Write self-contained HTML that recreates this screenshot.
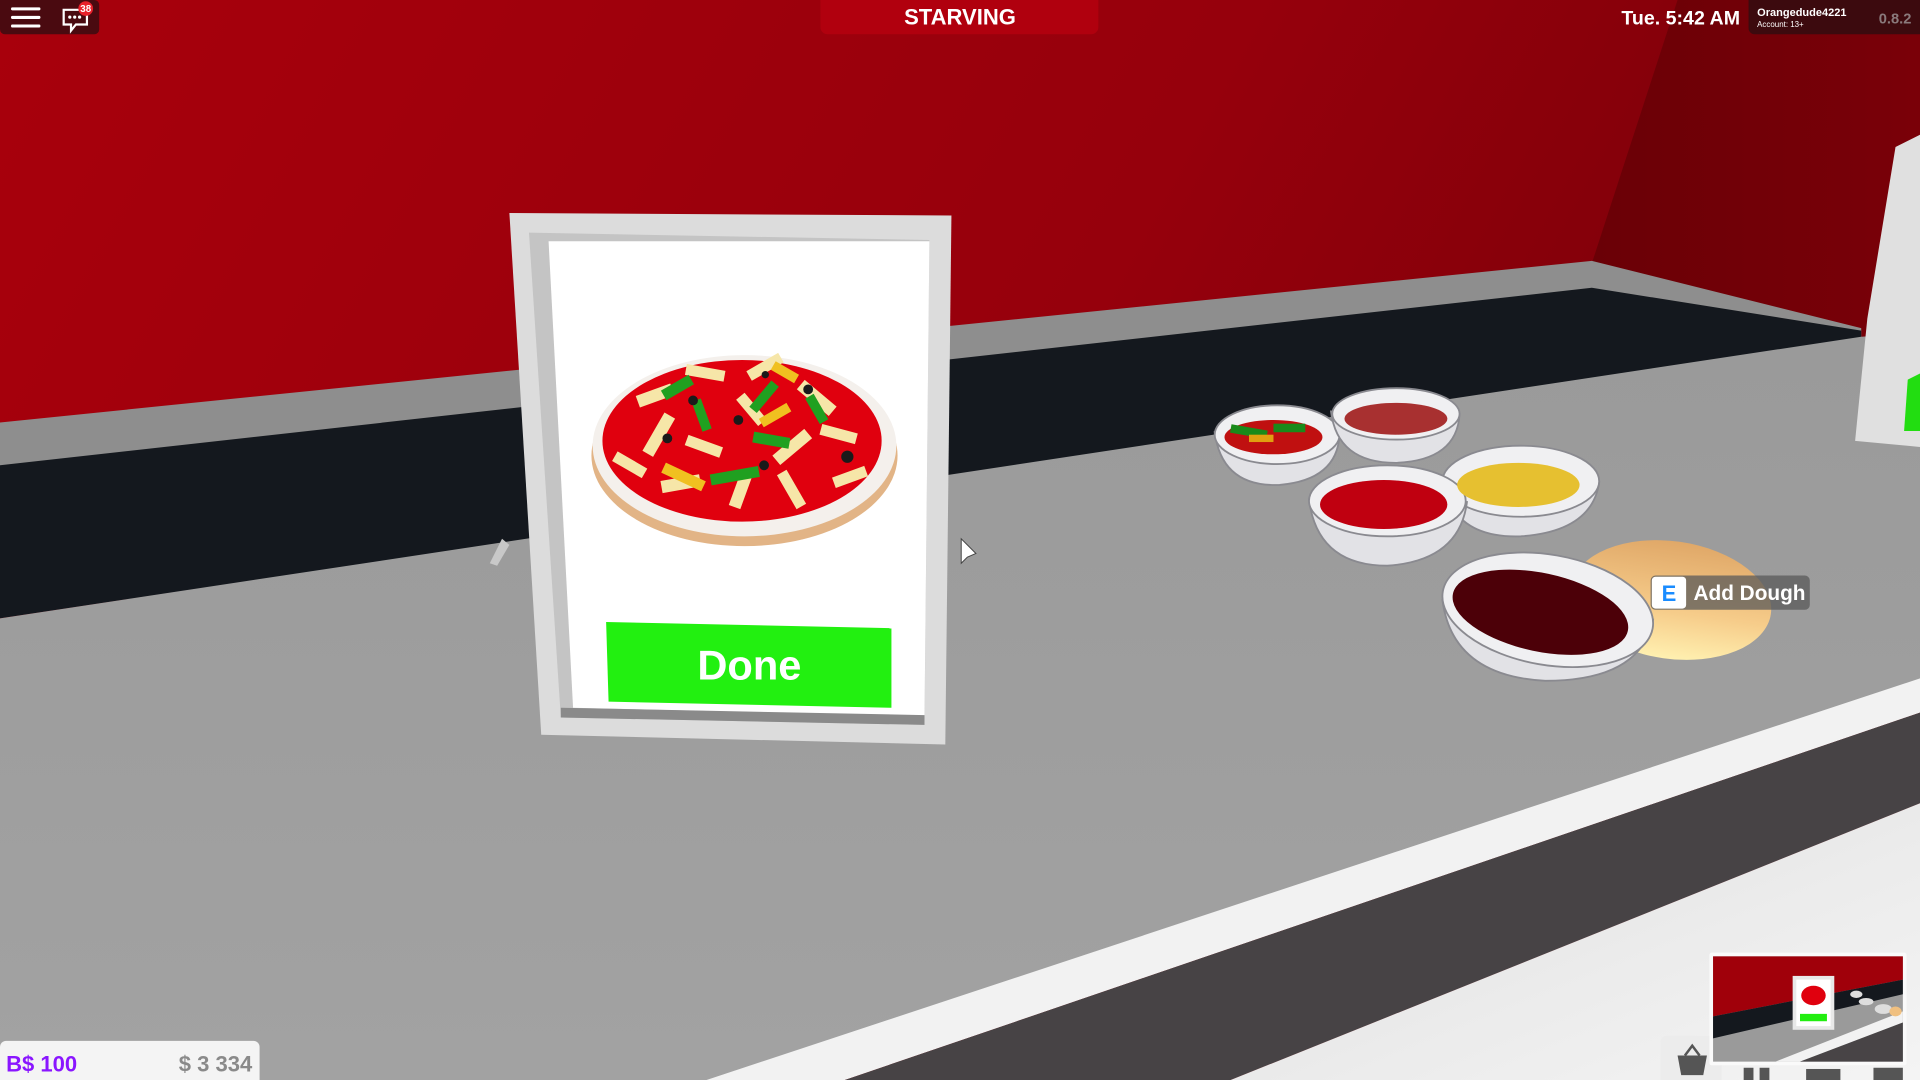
<!DOCTYPE html>
<html><head><meta charset="utf-8"><style>
html,body{margin:0;padding:0;width:1920px;height:1080px;overflow:hidden;background:#999}
svg{display:block}
text{font-family:"Liberation Sans",sans-serif}
</style></head><body>
<svg width="1920" height="1080" viewBox="0 0 1568 882" preserveAspectRatio="none">
<defs>
<linearGradient id="wall" x1="0" y1="0" x2="1" y2="0.3">
<stop offset="0" stop-color="#a8000c"/><stop offset="0.6" stop-color="#96000c"/><stop offset="1" stop-color="#780008"/></linearGradient>
<linearGradient id="wallR" x1="0" y1="0" x2="1" y2="0"><stop offset="0" stop-color="#6a0006"/><stop offset="1" stop-color="#7a0008"/></linearGradient>
<linearGradient id="dough" x1="0" y1="0" x2="0" y2="1"><stop offset="0" stop-color="#e0a868"/><stop offset="0.6" stop-color="#f6cc8a"/><stop offset="1" stop-color="#fff0b0"/></linearGradient>
<linearGradient id="ctr" x1="0" y1="0" x2="0" y2="1"><stop offset="0" stop-color="#9a9a9a"/><stop offset="1" stop-color="#a2a2a2"/></linearGradient>
<linearGradient id="floor" x1="0" y1="0" x2="1" y2="1"><stop offset="0" stop-color="#d0d0d0"/><stop offset="0.5" stop-color="#eaeaea"/><stop offset="1" stop-color="#f4f4f4"/></linearGradient>
</defs>
<rect x="0" y="0" width="1568" height="882" fill="url(#wall)"/>
<polygon points="1370,0 1568,0 1568,290 1300,215" fill="url(#wallR)"/>
<polygon points="0,345 1300,213 1520,268 1520,278 1300,236 0,382" fill="#8e8e8e"/>
<polygon points="0,380 1300,235 1520,270 1520,277 0,505" fill="#14181e"/>
<polygon points="0,505 1520,275 1568,272 1568,555 600,882 0,882" fill="url(#ctr)"/>
<polygon points="577,882 1568,554 1568,582 690,882" fill="#f2f2f2"/>
<polygon points="690,882 1568,582 1568,656 1005,882" fill="#474345"/>
<polygon points="1005,882 1568,656 1568,882" fill="url(#floor)"/>
<polygon points="400,460 410,440 416,445 406,462" fill="#c8c8c8"/>
<polygon points="1548,120 1568,110 1568,365 1515,360 1525,260" fill="#e0e0e0"/>
<polygon points="1558,310 1568,305 1568,352 1555,352" fill="#22dd11"/>
<polygon points="416,174 777,176 772,608 442,600" fill="#dcdcdc"/>
<polygon points="432,190 759,196 755,592 458,586" fill="#c4c4c4"/>
<polygon points="448,197 759,197 755,585 468,578" fill="#ffffff"/>
<polygon points="458,578 755,584 755,592 458,586" fill="#8a8a8a"/>
<ellipse cx="608" cy="372" rx="125" ry="74" fill="#e2b486"/>
<ellipse cx="608" cy="364" rx="124" ry="74" fill="#f4f0ec"/>
<ellipse cx="606" cy="360" rx="114" ry="66" fill="#e0000e"/>
<g fill="#f6e6a8">
<rect x="520" y="318" width="30" height="10" transform="rotate(-20 535 323)"/>
<rect x="560" y="300" width="32" height="9" transform="rotate(10 576 304)"/>
<rect x="610" y="295" width="30" height="9" transform="rotate(-30 625 300)"/>
<rect x="650" y="320" width="34" height="10" transform="rotate(40 667 325)"/>
<rect x="520" y="350" width="36" height="10" transform="rotate(-60 538 355)"/>
<rect x="560" y="360" width="30" height="9" transform="rotate(20 575 364)"/>
<rect x="630" y="360" width="34" height="10" transform="rotate(-40 647 365)"/>
<rect x="670" y="350" width="30" height="9" transform="rotate(15 685 354)"/>
<rect x="540" y="390" width="32" height="10" transform="rotate(-10 556 395)"/>
<rect x="590" y="395" width="30" height="10" transform="rotate(-70 605 400)"/>
<rect x="630" y="395" width="32" height="9" transform="rotate(60 646 400)"/>
<rect x="680" y="385" width="28" height="9" transform="rotate(-20 694 389)"/>
<rect x="500" y="375" width="28" height="9" transform="rotate(30 514 380)"/>
<rect x="600" y="330" width="28" height="9" transform="rotate(50 614 334)"/>
</g>
<g fill="#20a020">
<rect x="540" y="312" width="26" height="9" transform="rotate(-30 553 316)"/>
<rect x="610" y="320" width="28" height="8" transform="rotate(-50 624 324)"/>
<rect x="560" y="335" width="26" height="8" transform="rotate(70 573 339)"/>
<rect x="615" y="355" width="30" height="9" transform="rotate(10 630 359)"/>
<rect x="580" y="384" width="40" height="9" transform="rotate(-10 600 388)"/>
<rect x="655" y="330" width="24" height="8" transform="rotate(60 667 334)"/>
</g>
<g fill="#f0c020"><rect x="540" y="385" width="36" height="9" transform="rotate(25 558 390)"/><rect x="630" y="300" width="22" height="8" transform="rotate(30 641 304)"/><rect x="620" y="335" width="26" height="8" transform="rotate(-30 633 339)"/></g>
<g fill="#1a1a1a"><circle cx="566" cy="327" r="4"/><circle cx="603" cy="343" r="4"/><circle cx="545" cy="358" r="4"/><circle cx="624" cy="380" r="4"/><circle cx="692" cy="373" r="5"/><circle cx="660" cy="318" r="4"/><circle cx="625" cy="306" r="3"/></g>
<polygon points="495,508 728,513 728,578 497,573" fill="#22f010"/>
<text x="612" y="555" text-anchor="middle" font-size="34" font-weight="bold" fill="#fff">Done</text>
<polygon points="785,440 785,460 790,455 797,452" fill="#fff" stroke="#444" stroke-width="0.8"/>
<ellipse cx="1365" cy="490" rx="82" ry="48" fill="url(#dough)" transform="rotate(8 1365 490)"/>
<g stroke="#8a8a90" stroke-width="1.5">
<path d="M992,353 Q998,398 1045,396 Q1092,392 1094,355 Z" fill="#e2e2e6"/>
<ellipse cx="1043" cy="355" rx="51" ry="24" fill="#f0f0f2"/>
<path d="M1087,336 Q1092,378 1140,378 Q1190,376 1192,338 Z" fill="#e2e2e6"/>
<ellipse cx="1140" cy="338" rx="52" ry="21" fill="#f0f0f2"/>
<path d="M1178,392 Q1186,440 1242,438 Q1300,434 1306,394 Z" fill="#e2e2e6"/>
<ellipse cx="1242" cy="393" rx="64" ry="29" fill="#f0f0f2"/>
<path d="M1069,408 Q1076,462 1133,462 Q1192,458 1198,410 Z" fill="#e2e2e6"/>
<ellipse cx="1133" cy="409" rx="64" ry="29" fill="#f0f0f2"/>
<path d="M1178,490 Q1186,552 1262,556 Q1340,556 1350,506 Z" fill="#e2e2e6"/>
<ellipse cx="1264" cy="498" rx="87" ry="45" fill="#f0f0f2" transform="rotate(10 1264 498)"/>
</g>
<ellipse cx="1040" cy="357" rx="40" ry="14" fill="#c01010"/>
<g fill="#1a8a1a"><rect x="1005" y="349" width="30" height="7" transform="rotate(10 1020 352)"/><rect x="1040" y="346" width="26" height="7"/></g>
<rect x="1020" y="355" width="20" height="6" fill="#e0a010"/>
<ellipse cx="1140" cy="342" rx="42" ry="13" fill="#a83030"/>
<ellipse cx="1240" cy="396" rx="50" ry="18" fill="#e6c030"/>
<ellipse cx="1130" cy="412" rx="52" ry="20" fill="#c00010"/>
<ellipse cx="1258" cy="500" rx="73" ry="32" fill="#4c0008" transform="rotate(12 1258 500)"/>
<rect x="1348" y="470" width="130" height="28" rx="4" fill="#5a5a5a" fill-opacity="0.75"/>
<rect x="1349" y="471" width="28" height="26" rx="3" fill="#fff"/>
<text x="1363" y="491" text-anchor="middle" font-size="18" font-weight="bold" fill="#1a8cff">E</text>
<text x="1383" y="490" font-size="17" font-weight="bold" fill="#fff">Add Dough</text>
<rect x="0" y="0" width="81" height="28" rx="4" fill="#4a0a10"/>
<rect x="0" y="0" width="40" height="10" fill="#4a0a10"/>
<g fill="#fff"><rect x="9" y="6" width="24" height="2.5" rx="1"/><rect x="9" y="13" width="24" height="2.5" rx="1"/><rect x="9" y="20" width="24" height="2.5" rx="1"/></g>
<path d="M52,8 h19 v12 h-9 l-4,5 v-5 h-6 z" fill="none" stroke="#fff" stroke-width="1.8"/>
<g fill="#fff"><circle cx="57" cy="14" r="1.3"/><circle cx="61" cy="14" r="1.3"/><circle cx="65" cy="14" r="1.3"/></g>
<circle cx="70" cy="7" r="6" fill="#e8202a"/>
<text x="70" y="10" text-anchor="middle" font-size="8" font-weight="bold" fill="#fff">38</text>
<rect x="670" y="-6" width="227" height="34" rx="6" fill="#c00010" fill-opacity="0.6"/>
<text x="784" y="20" text-anchor="middle" font-size="18" font-weight="bold" fill="#fff">STARVING</text>
<text x="1421" y="20" text-anchor="end" font-size="16" font-weight="bold" fill="#fff">Tue. 5:42 AM</text>
<rect x="1428" y="-6" width="150" height="34" rx="5" fill="#3c0a0e"/>
<text x="1435" y="13" font-size="9" font-weight="bold" fill="#fff">Orangedude4221</text>
<text x="1435" y="22" font-size="6.5" fill="#fff">Account: 13+</text>
<text x="1561" y="19" text-anchor="end" font-size="12" font-weight="bold" fill="#8a7a7c">0.8.2</text>
<rect x="0" y="850" width="212" height="40" rx="5" fill="#f4f4f4"/>
<text x="5" y="875" font-size="18" font-weight="bold" fill="#8a16ff">B$ 100</text>
<text x="206" y="875" text-anchor="end" font-size="18" font-weight="bold" fill="#8a8a8a">$ 3 334</text>
<rect x="1356" y="846" width="50" height="40" rx="5" fill="#ececec"/>
<path d="M1370,862 h24 l-3,16 h-18 z" fill="#555"/>
<path d="M1376,862 l6,-8 l6,8" fill="none" stroke="#555" stroke-width="2"/>
<rect x="1424" y="872" width="8" height="10" fill="#555"/><rect x="1437" y="872" width="8" height="10" fill="#555"/>
<rect x="1475" y="873" width="28" height="9" fill="#555"/>
<rect x="1530" y="872" width="24" height="10" fill="#555"/>
<rect x="1396" y="778" width="161" height="92" rx="2" fill="#fafafa"/>
<rect x="1399" y="781" width="155" height="86" fill="#9a9a9a"/>
<polygon points="1399,781 1554,781 1554,800 1399,830" fill="#a0000a"/>
<polygon points="1399,830 1554,800 1554,812 1399,848" fill="#14181e"/>
<polygon points="1450,867 1554,826 1554,835 1470,867" fill="#f2f2f2"/>
<polygon points="1470,867 1554,835 1554,867" fill="#484446"/>
<rect x="1464" y="797" width="34" height="44" fill="#e8e8e8"/>
<rect x="1467" y="800" width="28" height="38" fill="#fff"/>
<ellipse cx="1481" cy="813" rx="10" ry="8" fill="#e0000e"/>
<rect x="1470" y="828" width="22" height="6" fill="#22ee11"/>
<ellipse cx="1516" cy="812" rx="5" ry="3" fill="#ddd"/><ellipse cx="1524" cy="818" rx="6" ry="3" fill="#ddd"/><ellipse cx="1538" cy="824" rx="7" ry="4" fill="#ddd"/><ellipse cx="1548" cy="826" rx="5" ry="4" fill="#f0c080"/>
</svg>
</body></html>
